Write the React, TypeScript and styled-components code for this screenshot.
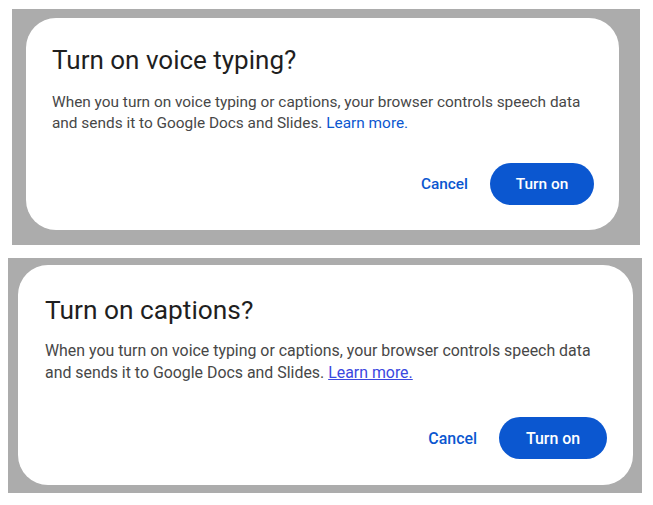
import React from 'react';
import styled, { createGlobalStyle } from 'styled-components';

const GlobalStyle = createGlobalStyle`
  body {
    margin: 0;
    background: #ffffff;
    font-family: Roboto, 'Noto Sans', Arial, sans-serif;
  }
`;

const Page = styled.div`
  width: 653px;
  height: 505px;
  display: flex;
  flex-direction: column;
`;

const Backdrop = styled.div<{ $pad: string; $margin: string }>`
  background: #acacac;
  padding: ${({ $pad }) => $pad};
  margin: ${({ $margin }) => $margin};
`;

const Card = styled.div<{ $pad: string }>`
  background: #ffffff;
  border-radius: 30px;
  padding: ${({ $pad }) => $pad};
  display: flex;
  flex-direction: column;
`;

const Title = styled.h2<{ $size: number }>`
  margin: 0;
  font-weight: 400;
  font-size: ${({ $size }) => $size}px;
  line-height: 32px;
  color: #1f1f1f;
`;

const Body = styled.p<{ $size: number; $gap: number; $lh: number }>`
  margin: ${({ $gap }) => $gap}px 0 0;
  font-size: ${({ $size }) => $size}px;
  line-height: ${({ $lh }) => $lh}px;
  color: #474747;
  white-space: nowrap;
`;

const Link = styled.a<{ $underline?: boolean }>`
  color: ${({ $underline }) => ($underline ? '#3b48e0' : '#0b57d0')};
  text-decoration: ${({ $underline }) => ($underline ? 'underline' : 'none')};
  cursor: pointer;
`;

const Actions = styled.div<{ $gap: number }>`
  display: flex;
  justify-content: flex-end;
  align-items: center;
  gap: 22px;
  margin-top: ${({ $gap }) => $gap}px;
`;

const TextButton = styled.button<{ $size: number }>`
  border: none;
  background: none;
  padding: 0;
  font-family: inherit;
  font-size: ${({ $size }) => $size}px;
  font-weight: 500;
  color: #0b57d0;
  cursor: pointer;
`;

const FilledButton = styled.button<{ $size: number; $w: number }>`
  border: none;
  border-radius: 21px;
  width: ${({ $w }) => $w}px;
  height: 42px;
  padding: 0;
  background: #0b57d0;
  color: #ffffff;
  font-family: inherit;
  font-size: ${({ $size }) => $size}px;
  font-weight: 500;
  cursor: pointer;
`;

interface DialogProps {
  title: string;
  underlineLink?: boolean;
  outer: { pad: string; margin: string };
  cardPad: string;
  titleSize: number;
  bodySize: number;
  lineHeight: number;
  bodyGap: number;
  actionsGap: number;
  buttonWidth: number;
}

const Dialog: React.FC<DialogProps> = ({
  title,
  underlineLink,
  outer,
  cardPad,
  titleSize,
  bodySize,
  lineHeight,
  bodyGap,
  actionsGap,
  buttonWidth,
}) => (
  <Backdrop $pad={outer.pad} $margin={outer.margin}>
    <Card $pad={cardPad}>
      <Title $size={titleSize}>{title}</Title>
      <Body $size={bodySize} $gap={bodyGap} $lh={lineHeight}>
        When you turn on voice typing or captions, your browser controls speech data
        <br />
        and sends it to Google Docs and Slides. <Link $underline={underlineLink}>Learn more.</Link>
      </Body>
      <Actions $gap={actionsGap}>
        <TextButton $size={bodySize}>Cancel</TextButton>
        <FilledButton $size={bodySize} $w={buttonWidth}>Turn on</FilledButton>
      </Actions>
    </Card>
  </Backdrop>
);

export default function App() {
  return (
    <>
      <GlobalStyle />
      <Page>
        <Dialog
          title="Turn on voice typing?"
          outer={{ pad: '9px 21px 15px 14px', margin: '9px 13px 0 12px' }}
          cardPad="26px 25px 25px 26px"
          titleSize={26}
          bodySize={15.4}
          lineHeight={21}
          bodyGap={16}
          actionsGap={29}
          buttonWidth={104}
        />
        <Dialog
          title="Turn on captions?"
          underlineLink
          outer={{ pad: '7px 9px 8px 10px', margin: '13px 11px 0 8px' }}
          cardPad="29px 26px 26px 27px"
          titleSize={26.3}
          bodySize={15.9}
          lineHeight={22}
          bodyGap={14}
          actionsGap={33}
          buttonWidth={108}
        />
      </Page>
    </>
  );
}
